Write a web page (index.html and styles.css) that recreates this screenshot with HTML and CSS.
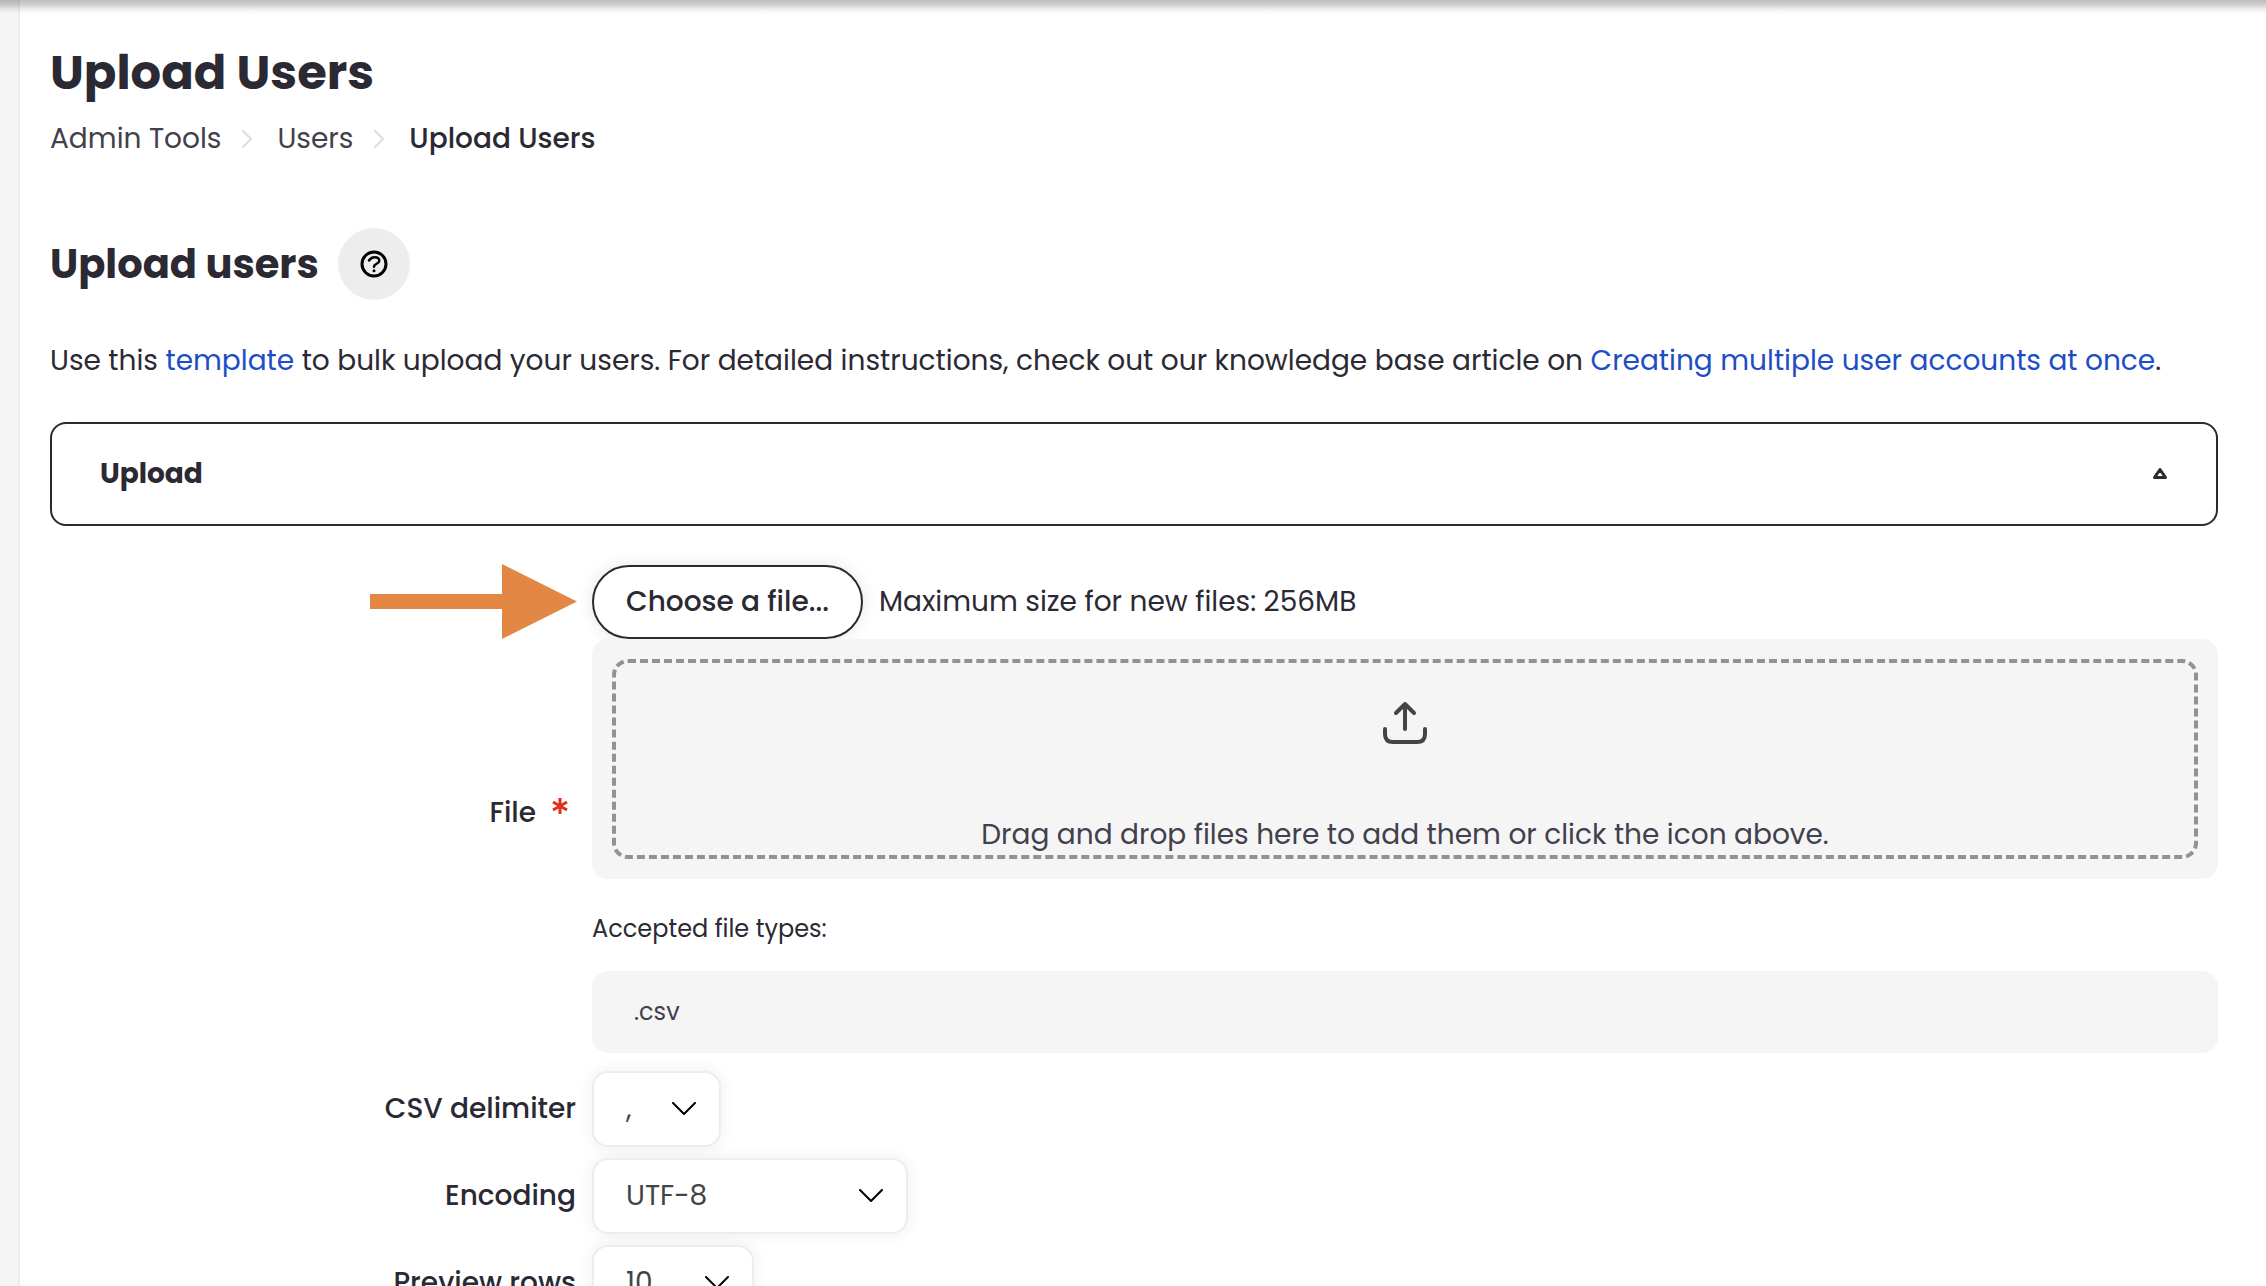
FILE: index.html
```html
<!DOCTYPE html>
<html lang="en">

<head>
  <meta charset="UTF-8">
  <meta name="viewport" content="width=device-width, initial-scale=1.0">
  <title>Upload Users</title>
  <link rel="stylesheet" href="styles.css">
</head>

<body>
  <aside class="drawer-edge"></aside>
  <main class="page">
    <header class="page-header">
      <h1>Upload Users</h1>
      <nav class="breadcrumb" aria-label="Breadcrumb">
        <a href="#">Admin Tools</a>
        <svg class="crumb-sep" viewBox="0 0 12 20"><path d="M2 2l8 8-8 8" /></svg>
        <a href="#">Users</a>
        <svg class="crumb-sep" viewBox="0 0 12 20"><path d="M2 2l8 8-8 8" /></svg>
        <a href="#" class="current" aria-current="page">Upload Users</a>
      </nav>
    </header>

    <div class="section-title">
      <h2>Upload users</h2>
      <button type="button" class="help-button" aria-label="Help with Upload users">
        <svg viewBox="0 0 28 28">
          <circle cx="14" cy="14" r="12" />
          <path class="hook" d="M9 10.500C10.500 8 12.300 7.200 14.600 7.200c2.700 0 4.700 1.300 4.700 3.500 0 3.300-5.300 2.800-5.300 6" />
          <circle class="dot" cx="14" cy="20.700" r="1.500" />
        </svg>
      </button>
    </div>

    <p class="intro">Use this <a href="#">template</a> to bulk upload your users. For detailed instructions, check out our knowledge base article on <a href="#">Creating multiple user accounts at once</a>.</p>

    <form class="upload-form">
      <button type="button" class="fieldset-toggle" aria-expanded="true">
        <span>Upload</span>
        <svg viewBox="0 0 16 14"><path d="M8 2.500l5.500 8h-11z" /></svg>
      </button>

      <div class="form-row">
        <label class="label-cell" for="choose-file">
          <span>File</span>
          <svg class="required" viewBox="0 0 16 18" role="img" aria-label="Required">
            <path d="M8 1v16M1 5l14 8M15 5L1 13" />
          </svg>
        </label>
        <div class="field-cell">
          <div class="file-actions">
            <svg class="pointer-arrow" viewBox="0 0 207 76"><path d="M0 30h132V0l75 37.500L132 75V45H0z" /></svg>
            <button type="button" id="choose-file" class="choose-button">Choose a file...</button>
            <span>Maximum size for new files: 256MB</span>
          </div>
          <div class="drop-area">
            <div class="drop-target">
              <button type="button" class="drop-button" aria-label="Add files">
                <svg viewBox="0 0 44 44">
                  <path d="M22 28V3M13 12l9-9 9 9M2 28v5q0 8 8 8h24q8 0 8-8v-5" />
                </svg>
              </button>
              <span>Drag and drop files here to add them or click the icon above.</span>
            </div>
          </div>
          <p class="types-title">Accepted file types:</p>
          <div class="types-list">.csv</div>
        </div>
      </div>

      <div class="form-row">
        <label class="label-cell" for="delimiter">CSV delimiter</label>
        <div class="select-wrap">
          <select id="delimiter" class="select-short">
            <option>,</option>
            <option>;</option>
            <option>:</option>
            <option>\t</option>
          </select>
          <svg viewBox="0 0 24 14"><path d="M1 1l11 11L23 1" /></svg>
        </div>
      </div>

      <div class="form-row">
        <label class="label-cell" for="encoding">Encoding</label>
        <div class="select-wrap">
          <select id="encoding" class="select-long">
            <option>UTF-8</option>
            <option>ISO-8859-1</option>
          </select>
          <svg viewBox="0 0 24 14"><path d="M1 1l11 11L23 1" /></svg>
        </div>
      </div>

      <div class="form-row">
        <label class="label-cell" for="preview-rows">Preview rows</label>
        <div class="select-wrap">
          <select id="preview-rows" class="select-medium">
            <option>10</option>
            <option>20</option>
            <option>100</option>
          </select>
          <svg viewBox="0 0 24 14"><path d="M1 1l11 11L23 1" /></svg>
        </div>
      </div>
    </form>
  </main>
</body>

</html>
```

FILE: styles.css
```css
* {
  box-sizing: border-box;
}

body {
  display: flex;
  height: 100vh;
  margin: 0;
  overflow: hidden;
  font-family: Poppins, Inter, sans-serif;
  font-size: 28px;
  line-height: 40px;
  color: #2b2933;
  background: #fff;
}

/* shadow cast by the top bar */
body::before {
  content: "";
  position: absolute;
  top: 0;
  left: 0;
  right: 0;
  height: 14px;
  background: linear-gradient(rgba(0, 0, 0, 0.25), rgba(0, 0, 0, 0.2) 30%, rgba(0, 0, 0, 0.05) 70%, rgba(0, 0, 0, 0));
}

h1,
h2,
p {
  margin: 0;
}

a {
  color: #1d4ec5;
  text-decoration: none;
}

button,
select {
  font: inherit;
  color: inherit;
  cursor: pointer;
}

svg {
  display: block;
  fill: none;
  stroke: currentColor;
  stroke-linecap: round;
  stroke-linejoin: round;
}

.drawer-edge {
  flex: none;
  width: 20px;
  background: #f5f5f5;
  border-right: 2px solid #ececee;
}

.page {
  flex: 1;
  padding: 41px 48px 0 30px;
}

h1 {
  font-size: 48px;
  line-height: 64px;
  font-weight: 700;
}

.breadcrumb {
  display: flex;
  align-items: center;
  padding-top: 14px;
}

.breadcrumb a {
  color: #42404d;
}

.breadcrumb .current {
  color: #2b2933;
  font-weight: 500;
}

.crumb-sep {
  width: 12px;
  height: 20px;
  margin: 0 24px 0 20px;
  color: #dddbe4;
  stroke-width: 2;
}

.section-title {
  display: flex;
  align-items: center;
  gap: 19px;
  margin-top: 69px;
}

h2 {
  font-size: 40px;
  line-height: 56px;
  font-weight: 700;
}

.help-button {
  display: grid;
  place-items: center;
  width: 72px;
  height: 72px;
  padding: 0;
  color: #000;
  background: #ededed;
  border: 0;
  border-radius: 50%;
}

.help-button svg {
  width: 28px;
  height: 28px;
  stroke-width: 3;
}

.help-button .hook {
  stroke-width: 2.5;
}

.help-button .dot {
  fill: currentColor;
  stroke: none;
}

.intro {
  margin-top: 41px;
}

.fieldset-toggle {
  display: flex;
  align-items: center;
  justify-content: space-between;
  width: 100%;
  height: 104px;
  margin: 41px 0 39px;
  padding: 0 48px;
  font-weight: 700;
  background: #fff;
  border: 2px solid #2b2933;
  border-radius: 16px;
}

.fieldset-toggle svg {
  width: 16px;
  height: 14px;
  stroke-width: 3;
}

.form-row {
  display: grid;
  grid-template-columns: 25% 1fr;
  align-items: center;
  margin-bottom: 11px;
}

.label-cell {
  display: flex;
  justify-content: flex-end;
  padding-right: 16px;
  font-weight: 500;
}

.required {
  width: 16px;
  height: 18px;
  margin: 4px 8px 0 16px;
  color: #e0301e;
  stroke-width: 3;
  stroke-linecap: butt;
}

.field-cell {
  padding-bottom: 7px;
}

.file-actions {
  position: relative;
  display: flex;
  align-items: center;
  gap: 16px;
}

/* callout that points at the button */
.pointer-arrow {
  position: absolute;
  right: 100%;
  width: 207px;
  height: 76px;
  margin-right: 15px;
  fill: #e38844;
  stroke: none;
}

.choose-button {
  height: 74px;
  padding: 0 32px;
  font-weight: 500;
  background: #fff;
  border: 2px solid #2b2933;
  border-radius: 37px;
  box-shadow: 0 0 16px rgba(43, 41, 51, 0.12);
}

.drop-area {
  position: relative;
  padding: 20px;
  background: #f5f5f5;
  border-radius: 16px;
}

.drop-target {
  display: flex;
  flex-direction: column;
  align-items: center;
  justify-content: space-between;
  height: 200px;
  padding-top: 38px;
  color: #42404d;
  border: 4px dashed #929292;
  border-radius: 16px;
}

.drop-button {
  padding: 0;
  color: #444;
  background: none;
  border: 0;
}

.drop-button svg {
  width: 44px;
  height: 44px;
  stroke-width: 4;
}

.types-title {
  padding: 30px 0 22px;
  font-size: 24px;
}

.types-list {
  padding: 21px 42px;
  font-size: 24px;
  color: #42404d;
  background: #f5f5f5;
  border-radius: 16px;
}

.select-wrap {
  display: grid;
  align-items: center;
  justify-self: start;
}

.select-wrap select,
.select-wrap svg {
  grid-area: 1 / 1;
}

.select-wrap select {
  appearance: none;
  height: 76px;
  padding: 0 32px;
  color: #444;
  background: #fff;
  border: 2px solid #ededed;
  border-radius: 16px;
  box-shadow: 0 0 16px rgba(43, 41, 51, 0.08);
}

.select-wrap svg {
  justify-self: end;
  width: 24px;
  height: 14px;
  margin-right: 25px;
  color: #000;
  stroke-width: 2;
  pointer-events: none;
}

.select-short {
  width: 129px;
}

.select-medium {
  width: 162px;
}

.select-long {
  width: 316px;
}
```
